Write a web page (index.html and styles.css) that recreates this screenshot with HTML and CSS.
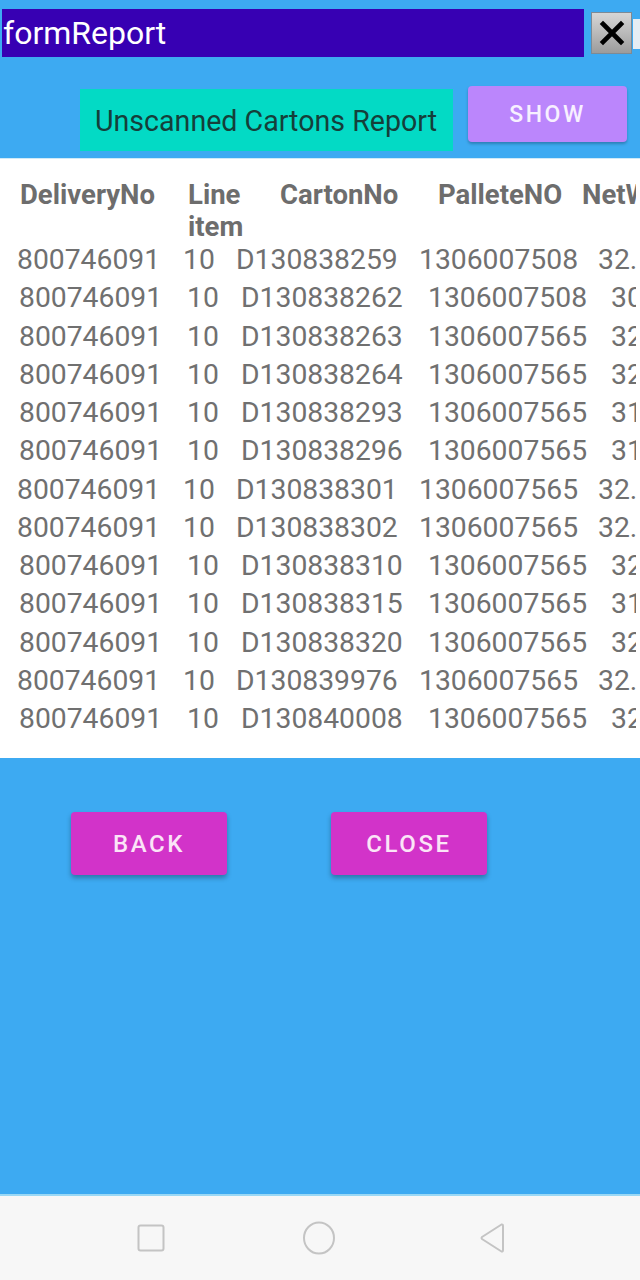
FILE: index.html
```html
<!DOCTYPE html>
<html>
<head>
<meta charset="utf-8">
<link rel="stylesheet" href="styles.css">
</head>
<body>
<div class="screen">
  <div class="titlebar">
    <div class="title">formReport</div>
    <div class="closebtn">
      <svg width="26" height="26" viewBox="0 0 26 26"><path d="M4 4L22 22M22 4L4 22" stroke="#000" stroke-width="4.6" stroke-linecap="square"/></svg>
    </div>
    <div class="edge"></div>
  </div>
  <div class="toolbar">
    <div class="report-label">Unscanned Cartons Report</div>
    <div class="btn show">SHOW</div>
  </div>
  <div class="table">
    <div class="clip">
      <div class="hdr">
        <div class="h1">DeliveryNo</div>
        <div class="h2">Line<br>item</div>
        <div class="h3">CartonNo</div>
        <div class="h4">PalleteNO</div>
        <div class="h5">NetWeight</div>
      </div>
      <div class="row b"><span>800746091</span><span>10</span><span>D130838259</span><span>1306007508</span><span>32.50</span></div>
      <div class="row a"><span>800746091</span><span>10</span><span>D130838262</span><span>1306007508</span><span>30</span></div>
      <div class="row a"><span>800746091</span><span>10</span><span>D130838263</span><span>1306007565</span><span>32</span></div>
      <div class="row a"><span>800746091</span><span>10</span><span>D130838264</span><span>1306007565</span><span>32</span></div>
      <div class="row a"><span>800746091</span><span>10</span><span>D130838293</span><span>1306007565</span><span>31</span></div>
      <div class="row a"><span>800746091</span><span>10</span><span>D130838296</span><span>1306007565</span><span>31</span></div>
      <div class="row b"><span>800746091</span><span>10</span><span>D130838301</span><span>1306007565</span><span>32.50</span></div>
      <div class="row b"><span>800746091</span><span>10</span><span>D130838302</span><span>1306007565</span><span>32.50</span></div>
      <div class="row a"><span>800746091</span><span>10</span><span>D130838310</span><span>1306007565</span><span>32</span></div>
      <div class="row a"><span>800746091</span><span>10</span><span>D130838315</span><span>1306007565</span><span>31</span></div>
      <div class="row a"><span>800746091</span><span>10</span><span>D130838320</span><span>1306007565</span><span>32</span></div>
      <div class="row b"><span>800746091</span><span>10</span><span>D130839976</span><span>1306007565</span><span>32.50</span></div>
      <div class="row a"><span>800746091</span><span>10</span><span>D130840008</span><span>1306007565</span><span>32</span></div>
    </div>
  </div>
  <div class="actions">
    <div class="btn action back">BACK</div>
    <div class="btn action close">CLOSE</div>
  </div>
  <div class="navbar">
    <svg class="nav-ico" width="30" height="30" viewBox="0 0 30 30"><rect x="2.5" y="2.5" width="25" height="25" rx="2" fill="none" stroke="#c4c4c4" stroke-width="2"/></svg>
    <svg class="nav-ico" width="34" height="34" viewBox="0 0 34 34"><ellipse cx="17" cy="17" rx="15" ry="15.5" fill="none" stroke="#c4c4c4" stroke-width="2"/></svg>
    <svg class="nav-ico" width="30" height="34" viewBox="0 0 30 34"><path d="M24.5 3.5 Q26 3 26 5 L26 29 Q26 31 24.5 30.5 L5 18 Q4 17 5 16 Z" fill="none" stroke="#c4c4c4" stroke-width="2" stroke-linejoin="round"/></svg>
  </div>
</div>
</body>
</html>
```

FILE: styles.css
```css
html, body {
  margin: 0;
  padding: 0;
}
body {
  background: #3daaf2;
  font-family: Roboto, "Liberation Sans", sans-serif;
}
.screen {
  width: 640px;
  height: 1280px;
  display: flex;
  flex-direction: column;
  overflow: hidden;
}
.titlebar {
  display: flex;
  align-items: flex-start;
  padding: 9px 0 0 2px;
  height: 48px;
}
.title {
  width: 582px;
  height: 48px;
  background: #3700b3;
  color: #ffffff;
  font-size: 32px;
  line-height: 48px;
  padding-left: 1px;
  box-sizing: border-box;
}
.closebtn {
  margin: 3px 0 0 7px;
  width: 41px;
  height: 42px;
  box-sizing: border-box;
  border: 1px solid #7d8a95;
  background: linear-gradient(#d6d6d6, #b4b4b4 60%, #9c9c9c);
  display: flex;
  align-items: center;
  justify-content: center;
}
.edge {
  margin: 10px 0 0 1px;
  width: 7px;
  height: 30px;
  background: #e6eef4;
}
.toolbar {
  display: flex;
  align-items: flex-start;
  padding: 29px 0 0 80px;
  height: 72px;
}
.report-label {
  margin-top: 3px;
  width: 373px;
  height: 62px;
  background: #03dac5;
  color: #153f3a;
  font-size: 28.6px;
  line-height: 64px;
  padding-left: 15px;
  box-sizing: border-box;
  white-space: nowrap;
}
.btn {
  display: flex;
  align-items: center;
  justify-content: center;
  font-weight: 500;
  letter-spacing: 2.6px;
  border-radius: 4px;
}
.show {
  margin-left: 15px;
  width: 159px;
  height: 56px;
  background: #bb86fc;
  color: #f7f0ff;
  font-size: 23px;
  box-shadow: 0 2px 3px rgba(0, 0, 0, 0.25);
}
.table {
  background: #ffffff;
  height: 599px;
  border-top: 1px solid #cfeaf8;
}
.clip {
  width: 636px;
  overflow: hidden;
}
.hdr {
  display: grid;
  grid-template-columns: 168px 92px 158px 144px 200px;
  padding: 20px 0 0 20px;
  margin-bottom: -2px;
  font-size: 27.5px;
  font-weight: 700;
  line-height: 32px;
  color: #6d6d6d;
  white-space: nowrap;
  overflow: hidden;
}
.row {
  display: grid;
  font-size: 28.3px;
  line-height: 38.25px;
  color: #707070;
  white-space: nowrap;
  overflow: hidden;
}
.row.a {
  grid-template-columns: 168px 54px 187px 183px 100px;
  padding-left: 19px;
}
.row.b {
  grid-template-columns: 166px 53px 183px 179px 100px;
  padding-left: 17px;
}
.actions {
  display: flex;
  padding: 54px 0 0 71px;
}
.action {
  width: 156px;
  height: 63px;
  background: #d233c9;
  color: #fbe4f7;
  font-size: 24px;
  box-shadow: 0 3px 5px rgba(0, 0, 0, 0.3);
}
.close {
  margin-left: 104px;
}
.navbar {
  margin-top: auto;
  height: 84px;
  background: #f7f7f7;
  border-top: 2px solid #9ad8f5;
  display: flex;
  align-items: center;
  padding-left: 136px;
}
.nav-ico:nth-child(2) {
  margin-left: 136px;
}
.nav-ico:nth-child(3) {
  margin-left: 141px;
}
```
